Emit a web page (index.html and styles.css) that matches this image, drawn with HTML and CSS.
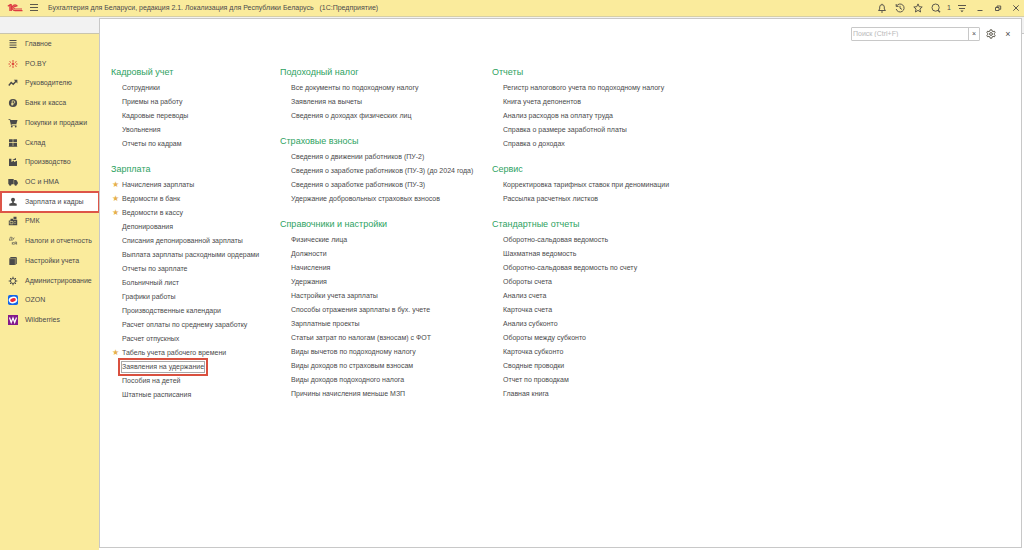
FILE: index.html
```html
<!DOCTYPE html>
<html lang="ru">
<head>
<meta charset="utf-8">
<title>Бухгалтерия для Беларуси</title>
<link rel="stylesheet" href="styles.css">
</head>
<body>
<header class="topbar">
  <svg class="logo" viewBox="0 0 16 10" aria-label="1C"><path d="M.8 3.300 2.900 1.800V8M4.300 1.300V8M2.900 1.600h1.400M10.500 3.300A2.900 2.900 0 1 0 8 7.700h7.500M9.300 3.900A1.400 1.400 0 1 0 8 6h7" fill="none" stroke="#dc3a42" stroke-width="1.200"/></svg>
  <button class="tool menu" aria-label="Меню"><svg viewBox="0 0 10 10"><path d="M1 1.500h8M1 4.500h8M1 7.500h8"/></svg></button>
  <h1 class="title">Бухгалтерия для Беларуси, редакция 2.1. Локализация для Республики Беларусь &nbsp; (1С:Предприятие)</h1>
  <div class="tools">
    <button class="tool" aria-label="Уведомления"><svg viewBox="0 0 10 10"><path d="M1.500 7.500h7L7.300 6V4a2.300 2.300 0 0 0-4.600 0v2zM4 9h2M5 .8v1"/></svg></button>
    <button class="tool" aria-label="История"><svg viewBox="0 0 10 10"><path d="M1.500 3.200A4 4 0 1 1 1.200 6M1.200 1v2.400h2.400M5 2.800v2.400l2 1.200"/></svg></button>
    <button class="tool" aria-label="Избранное"><svg viewBox="0 0 10 10"><path d="m5 .9 1.200 2.800 3 .3-2.300 2 .7 3L5 7.400 2.400 9l.7-3L.8 4l3-.3z"/></svg></button>
    <button class="tool" aria-label="Поиск"><svg viewBox="0 0 10 10"><circle cx="4.600" cy="4.600" r="3.600"/><path d="m7 7.300 2 1.900" stroke-width="1.400"/></svg></button>
    <span class="count">1</span>
    <button class="tool" aria-label="Настройка"><svg viewBox="0 0 10 10"><path d="M1 2.500h8M2 5.500h6"/><path d="M3.400 7.500h3.200L5 9.300z" fill="#4d4a40" stroke="none"/></svg></button>
    <button class="tool" aria-label="Свернуть"><svg viewBox="0 0 10 10"><path d="M2.500 7.500h5"/></svg></button>
    <button class="tool" aria-label="Восстановить"><svg viewBox="0 0 10 10"><path d="M2.500 4.500h3.500v3h-3.500zM4 4.300V3h3.700v3.300H6.200"/></svg></button>
    <button class="tool" aria-label="Закрыть"><svg viewBox="0 0 10 10"><path d="m2.300 2.300 5.400 5.400m0-5.400L2.300 7.700"/></svg></button>
  </div>
</header>
<div class="workspace">
  <nav class="sidebar">
    <ul class="sections">
      <li><a class="section" href="#"><svg viewBox="0 0 10 10"><path class="ln" d="M1.500 1.500h7M1.500 3.800h7M1.500 6.100h7M1.500 8.400h7"/></svg>Главное</a></li>
      <li><a class="section" href="#"><svg viewBox="0 0 10 10"><g stroke="#dd4a3c" stroke-width="1"><path d="M5 1v2M5 7v2M1.500 2.500l1.500 1M7 6.500l1.600 1M1.500 7.500 3 6.500M7 3.500l1.500-1M.5 5H2M8 5h1.500"/></g><circle cx="5" cy="5" r="1.400" fill="#dd4a3c"/></svg>PO.BY</a></li>
      <li><a class="section" href="#"><svg viewBox="0 0 10 10"><path class="ln bold" d="m.8 7.500 2.400-3 2 1.700L8 3.200"/><path d="M5.800 1.800h3.600v3.600z"/></svg>Руководителю</a></li>
      <li><a class="section" href="#"><svg viewBox="0 0 10 10"><circle cx="5" cy="5" r="4.100"/><path d="M4.200 7.600V2.800h1.300a1.200 1.200 0 0 1 0 2.600H3.200M3.200 6.600h2.300" fill="none" stroke="#faeb9c" stroke-width=".8"/></svg>Банк и касса</a></li>
      <li><a class="section" href="#"><svg viewBox="0 0 10 10"><path d="M.5 1h1.700l.4 1H9.500L8.400 6H3.500l.2.800h4.800v.8H3L1.700 1.800H.5z"/><circle cx="3.800" cy="8.600" r=".9"/><circle cx="7.700" cy="8.600" r=".9"/></svg>Покупки и продажи</a></li>
      <li><a class="section" href="#"><svg viewBox="0 0 10 10"><path d="M1 1.200h3.700v3H1zM5.300 1.200H9v3H5.300zM1 4.900h3.700v3H1zM5.300 4.900H9v3H5.300zM.8 8.200h8.400V9H.8z"/></svg>Склад</a></li>
      <li><a class="section" href="#"><svg viewBox="0 0 10 10"><path d="M1 9V1.800h2.400V5L6 3.600V5L9 3.800V9zM4.300 3 8 1v2z"/></svg>Производство</a></li>
      <li><a class="section" href="#"><svg viewBox="0 0 10 10"><path d="M.3 2h5.400v5.200H.3zM6.100 3h2.200l1.500 2.200v2H6.100z"/><circle cx="2.200" cy="7.500" r="1.200"/><circle cx="7.700" cy="7.500" r="1.200"/></svg>ОС и НМА</a></li>
      <li><a class="section current" href="#" aria-current="page"><svg viewBox="0 0 10 10"><circle cx="5" cy="2.800" r="2"/><path d="M4.200 4h1.600v1.700l2.900 1V8.800H1.300V6.700l2.900-1z"/></svg>Зарплата и кадры</a></li>
      <li><a class="section" href="#"><svg viewBox="0 0 10 10"><path d="M5.500.8h3v2.400h-3zM2.500 2.800h2.600v1H9.200V9.300H.8V4.500h1.700z"/><path d="M2 5.500h3v2.300H2zM6 5.500h.8m.5 0H8M6 7.300h.8m.5 0H8" fill="none" stroke="#faeb9c" stroke-width=".6"/></svg>РМК</a></li>
      <li><a class="section" href="#"><svg viewBox="0 0 10 10"><path class="ln thin" d="M1 4.200h2.700V1.200H2.300L1.500 4M4.500 1.500l.9 1.500L6.300 1.500M5.400 3l-.9 1.500M4.300 6v2.700M6 6 4.500 7.300 6 8.700M6.800 8.700V6h1.800v2.700M6.800 7.400h1.800"/></svg>Налоги и отчетность</a></li>
      <li><a class="section" href="#"><svg viewBox="0 0 10 10"><path d="M1.300 2.500 2.800 1h6v6.500L7.500 9H1.300z"/><path d="M7.300 9V2.700H1.600M7.300 2.700 8.700 1.200" fill="none" stroke="#faeb9c" stroke-width=".4"/></svg>Настройки учета</a></li>
      <li><a class="section" href="#"><svg viewBox="0 0 10 10"><circle class="ln" cx="5" cy="5" r="2.500"/><path class="ln" d="M5 .7v1.600M5 7.700v1.600M.7 5h1.600M7.700 5h1.600M2 2l1 1M7 7l1 1M8 2 7 3M3 7 2 8"/></svg>Администрирование</a></li>
      <li><a class="section" href="#"><svg viewBox="0 0 10 10"><rect width="10" height="10" rx="1.800" fill="#1465e8"/><ellipse cx="5" cy="5" rx="4.300" ry="3.400" fill="#fff" transform="rotate(-15 5 5)"/><ellipse cx="5" cy="5" rx="2.900" ry="1.700" fill="#ee2838" transform="rotate(-15 5 5)"/></svg>OZON</a></li>
      <li><a class="section" href="#"><svg viewBox="0 0 10 10"><rect width="10" height="10" fill="#83198c"/><path d="m1.500 2.500 1.700 5L5 3l1.700 4.500 1.800-5" fill="none" stroke="#fff" stroke-width="1.200"/></svg>Wildberries</a></li>
    </ul>
  </nav>
  <main class="panel">
    <div class="panel-bar">
      <form class="search"><input type="text" placeholder="Поиск (Ctrl+F)" aria-label="Поиск"><button type="reset" aria-label="Очистить">×</button></form>
      <button class="tool" aria-label="Настройки"><svg viewBox="0 0 10 10"><circle cx="5" cy="5" r="1.400"/><path d="m4.200.8-.3 1.300-1 .5-1.300-.4-.8 1.400 1 .9v1l-1 .9.8 1.400 1.300-.4 1 .5.300 1.300h1.600l.3-1.300 1-.5 1.300.4.8-1.400-1-.9v-1l1-.9-.8-1.400-1.300.4-1-.5L5.800.8z"/></svg></button>
      <button class="close" aria-label="Закрыть раздел">×</button>
    </div>
    <div class="columns">
      <div class="column">
        <section><h2>Кадровый учет</h2><ul>
          <li><a href="#">Сотрудники</a></li><li><a href="#">Приемы на работу</a></li><li><a href="#">Кадровые переводы</a></li><li><a href="#">Увольнения</a></li><li><a href="#">Отчеты по кадрам</a></li></ul></section>
        <section><h2>Зарплата</h2><ul>
          <li class="starred"><a href="#">Начисления зарплаты</a></li><li class="starred"><a href="#">Ведомости в банк</a></li><li class="starred"><a href="#">Ведомости в кассу</a></li><li><a href="#">Депонирования</a></li><li><a href="#">Списания депонированной зарплаты</a></li><li><a href="#">Выплата зарплаты расходными ордерами</a></li><li><a href="#">Отчеты по зарплате</a></li><li><a href="#">Больничный лист</a></li><li><a href="#">Графики работы</a></li><li><a href="#">Производственные календари</a></li><li><a href="#">Расчет оплаты по среднему заработку</a></li><li><a href="#">Расчет отпускных</a></li><li class="starred"><a href="#">Табель учета рабочего времени</a></li><li><a class="marked" href="#">Заявления на удержание</a></li><li><a href="#">Пособия на детей</a></li><li><a href="#">Штатные расписания</a></li></ul></section>
      </div>
      <div class="column">
        <section><h2>Подоходный налог</h2><ul>
          <li><a href="#">Все документы по подоходному налогу</a></li><li><a href="#">Заявления на вычеты</a></li><li><a href="#">Сведения о доходах физических лиц</a></li></ul></section>
        <section><h2>Страховые взносы</h2><ul>
          <li><a href="#">Сведения о движении работников (ПУ-2)</a></li><li><a href="#">Сведения о заработке работников (ПУ-3) (до 2024 года)</a></li><li><a href="#">Сведения о заработке работников (ПУ-3)</a></li><li><a href="#">Удержание добровольных страховых взносов</a></li></ul></section>
        <section><h2>Справочники и настройки</h2><ul>
          <li><a href="#">Физические лица</a></li><li><a href="#">Должности</a></li><li><a href="#">Начисления</a></li><li><a href="#">Удержания</a></li><li><a href="#">Настройки учета зарплаты</a></li><li><a href="#">Способы отражения зарплаты в бух. учете</a></li><li><a href="#">Зарплатные проекты</a></li><li><a href="#">Статьи затрат по налогам (взносам) с ФОТ</a></li><li><a href="#">Виды вычетов по подоходному налогу</a></li><li><a href="#">Виды доходов по страховым взносам</a></li><li><a href="#">Виды доходов подоходного налога</a></li><li><a href="#">Причины начисления меньше МЗП</a></li></ul></section>
      </div>
      <div class="column">
        <section><h2>Отчеты</h2><ul>
          <li><a href="#">Регистр налогового учета по подоходному налогу</a></li><li><a href="#">Книга учета депонентов</a></li><li><a href="#">Анализ расходов на оплату труда</a></li><li><a href="#">Справка о размере заработной платы</a></li><li><a href="#">Справка о доходах</a></li></ul></section>
        <section><h2>Сервис</h2><ul>
          <li><a href="#">Корректировка тарифных ставок при деноминации</a></li><li><a href="#">Рассылка расчетных листков</a></li></ul></section>
        <section><h2>Стандартные отчеты</h2><ul>
          <li><a href="#">Оборотно-сальдовая ведомость</a></li><li><a href="#">Шахматная ведомость</a></li><li><a href="#">Оборотно-сальдовая ведомость по счету</a></li><li><a href="#">Обороты счета</a></li><li><a href="#">Анализ счета</a></li><li><a href="#">Карточка счета</a></li><li><a href="#">Анализ субконто</a></li><li><a href="#">Обороты между субконто</a></li><li><a href="#">Карточка субконто</a></li><li><a href="#">Сводные проводки</a></li><li><a href="#">Отчет по проводкам</a></li><li><a href="#">Главная книга</a></li></ul></section>
      </div>
    </div>
  </main>
</div>
</body>
</html>
```
FILE: styles.css
```css
* { box-sizing: border-box; }
body {
  margin: 0;
  min-height: 100vh;
  display: flex;
  flex-direction: column;
  background: #fff;
  color: #4a4a4c;
  font: 7px/14px "Liberation Sans", Arial, sans-serif;
}
h1, h2, ul { margin: 0; padding: 0; font-weight: normal; list-style: none; }
a { color: inherit; text-decoration: none; white-space: nowrap; }
button { padding: 0; border: 0; background: none; color: inherit; font: inherit; }

.topbar {
  display: flex;
  align-items: center;
  height: 17px;
  padding: 0 3px 0 7px;
  background: #faeb9c;
  border-bottom: 1px solid #d6cfa6;
}
.logo { width: 16px; height: 10px; }
.tool { width: 10px; height: 10px; }
.tool svg { display: block; fill: none; stroke: #5c584c; stroke-width: 1; }
.menu { margin: 0 9px 0 6px; }
.title { font-size: 7px; white-space: nowrap; }
.tools { display: flex; align-items: center; gap: 8px; margin-left: auto; }
.count { width: 8px; margin: 0 -4px; text-align: center; }

.workspace {
  flex: 1;
  display: flex;
  background: linear-gradient(#f2f2f2 16px, #c8c8c8 16px, #c8c8c8 17px, #fff 17px);
}
.sidebar {
  width: 99px;
  margin-top: 16px;
  background: #faeb9c;
  border-top: 1px solid #c9c5ae;
}
.sections { display: grid; grid-auto-rows: 1fr; height: 296px; }
.section {
  display: flex;
  align-items: center;
  gap: 7px;
  height: 100%;
  padding-left: 8px;
}
.section svg { width: 10px; height: 10px; fill: #4a4a4a; }
.section .ln { fill: none; stroke: #4a4a4a; stroke-width: 1; }
.section .thin { stroke-width: .6; }
.section .bold { stroke-width: 1.4; }
.current {
  padding-left: 7px;
  background: #fff;
  outline: 2px solid #dd5548;
  outline-offset: -1px;
  margin-left: 1px;
}

.panel {
  flex: 1;
  margin: 1px 2px 2px 0;
  background: #fff;
  border: 1px solid #c8c8c8;
}
.panel-bar {
  display: flex;
  justify-content: flex-end;
  align-items: center;
  gap: 6px;
  padding: 8px 8px 0 0;
}
.search { display: flex; width: 129px; height: 14px; border: 1px solid #c8c8c8; border-radius: 1px; }
.search input { flex: 1; min-width: 0; padding: 0 1px; border: 0; font: inherit; outline: 0; }
.search input::placeholder { color: #b9b9b9; }
.search button { width: 11px; border-left: 1px solid #c8c8c8; line-height: 12px; }
.close { width: 10px; margin-left: 1px; font-size: 9px; }

.columns {
  display: grid;
  grid-template-columns: 169px 212px 1fr;
  padding: 22px 11px;
}
.column { display: flex; flex-direction: column; gap: 9px; }
.column h2 { color: #2ea25f; font-size: 9px; line-height: 18px; }
.column li { height: 14px; padding-left: 11px; position: relative; }
.starred::before {
  content: "★";
  position: absolute;
  left: 1px;
  color: #e5b04c;
  font-size: 8px;
  font-family: "DejaVu Sans", sans-serif;
}
.marked {
  display: inline-block;
  height: 10px;
  line-height: 10px;
  outline: 2px solid #d9503f;
  outline-offset: 2px;
  box-shadow: 0 0 0 1px #aaa;
}
```
